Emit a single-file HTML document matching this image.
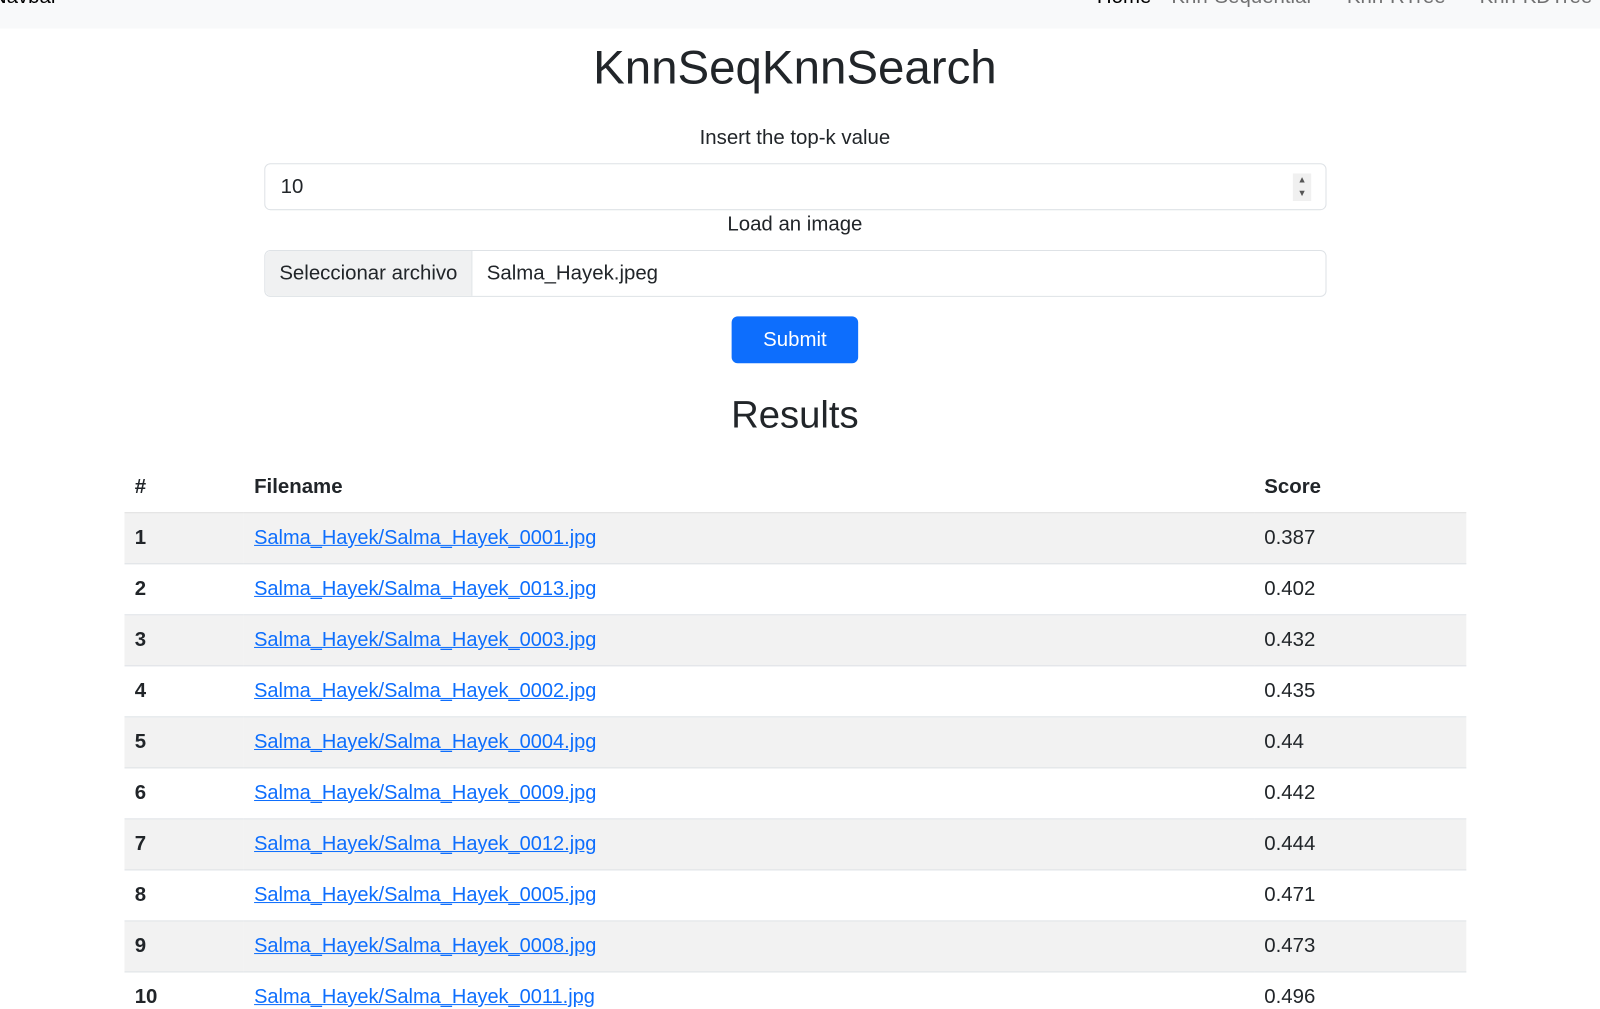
<!DOCTYPE html>
<html><head><style>
html,body{margin:0;width:1600px;height:1009px;overflow:hidden;background:#fff}
#w{position:relative;width:1568px;height:989px;transform:scale(1.0204);transform-origin:0 0;font-family:"Liberation Sans",sans-serif;color:#212529;font-size:20px}
.nav{position:absolute;left:0;top:0;width:1600px;height:28px;background:#f8f9fa}
.nav span{position:absolute;top:-14px;font-size:20px;color:rgba(0,0,0,.55)}
h1{position:absolute;left:0;width:1558px;text-align:center;top:38px;margin:0;font-weight:400;font-size:46.5px;line-height:56px}
.lbl{position:absolute;width:1558px;text-align:center;font-size:20px}
.box{position:absolute;left:259px;width:1039px;height:44px;border:1px solid #dee2e6;border-radius:6px;box-sizing:content-box}
.spin{position:absolute;right:14px;top:9px;width:18px;height:27px;background:#f0f0f0;font-size:9px;line-height:13px;text-align:center;color:#555}
.file{position:absolute;left:0;top:0;width:202px;height:44px;background:#f0f1f2;border-right:1px solid #dee2e6;border-radius:6px 0 0 6px;line-height:44px;text-align:center}
.btn{position:absolute;left:717px;top:310px;width:124px;height:46px;background:#0d6efd;color:#fff;border-radius:6px;text-align:center;line-height:46px}
h2{position:absolute;left:0;width:1558px;text-align:center;top:383px;margin:0;font-weight:400;font-size:37.5px;line-height:46px}
table{position:absolute;left:122px;top:453px;width:1315px;border-collapse:collapse}
td,th{height:49px;padding:0 10px;text-align:left;border-bottom:1px solid #dee2e6}
th{font-weight:bold;border-bottom:1px solid #ddd}
tbody tr:nth-child(odd) td{background:#f2f2f2}
td:first-child{font-weight:bold}
a{color:#0d6efd;text-decoration:underline;font-size:19.6px}
</style></head><body><div id="w">
<div class="nav"><span style="left:-8px;color:#000">Navbar</span><span style="left:1075px;color:#000">Home</span><span style="left:1148px">Knn-Sequential</span><span style="left:1320px">Knn-RTree</span><span style="left:1450px">Knn-KDTree</span></div>
<h1>KnnSeqKnnSearch</h1>
<div class="lbl" style="top:124px">Insert the top-k value</div>
<div class="box" style="top:160px"><span style="position:absolute;left:15px;top:11px">10</span><div class="spin">▲<br>▼</div></div>
<div class="lbl" style="top:209px">Load an image</div>
<div class="box" style="top:245px"><div class="file">Seleccionar archivo</div><span style="position:absolute;left:217px;top:11px">Salma_Hayek.jpeg</span></div>
<div class="btn">Submit</div>
<h2>Results</h2>
<table>
<thead><tr><th style="width:97px">#</th><th style="width:970px">Filename</th><th>Score</th></tr></thead>
<tbody>
<tr><td>1</td><td><a>Salma_Hayek/Salma_Hayek_0001.jpg</a></td><td>0.387</td></tr>
<tr><td>2</td><td><a>Salma_Hayek/Salma_Hayek_0013.jpg</a></td><td>0.402</td></tr>
<tr><td>3</td><td><a>Salma_Hayek/Salma_Hayek_0003.jpg</a></td><td>0.432</td></tr>
<tr><td>4</td><td><a>Salma_Hayek/Salma_Hayek_0002.jpg</a></td><td>0.435</td></tr>
<tr><td>5</td><td><a>Salma_Hayek/Salma_Hayek_0004.jpg</a></td><td>0.44</td></tr>
<tr><td>6</td><td><a>Salma_Hayek/Salma_Hayek_0009.jpg</a></td><td>0.442</td></tr>
<tr><td>7</td><td><a>Salma_Hayek/Salma_Hayek_0012.jpg</a></td><td>0.444</td></tr>
<tr><td>8</td><td><a>Salma_Hayek/Salma_Hayek_0005.jpg</a></td><td>0.471</td></tr>
<tr><td>9</td><td><a>Salma_Hayek/Salma_Hayek_0008.jpg</a></td><td>0.473</td></tr>
<tr><td>10</td><td><a>Salma_Hayek/Salma_Hayek_0011.jpg</a></td><td>0.496</td></tr>
</tbody>
</table>
</div></body></html>
